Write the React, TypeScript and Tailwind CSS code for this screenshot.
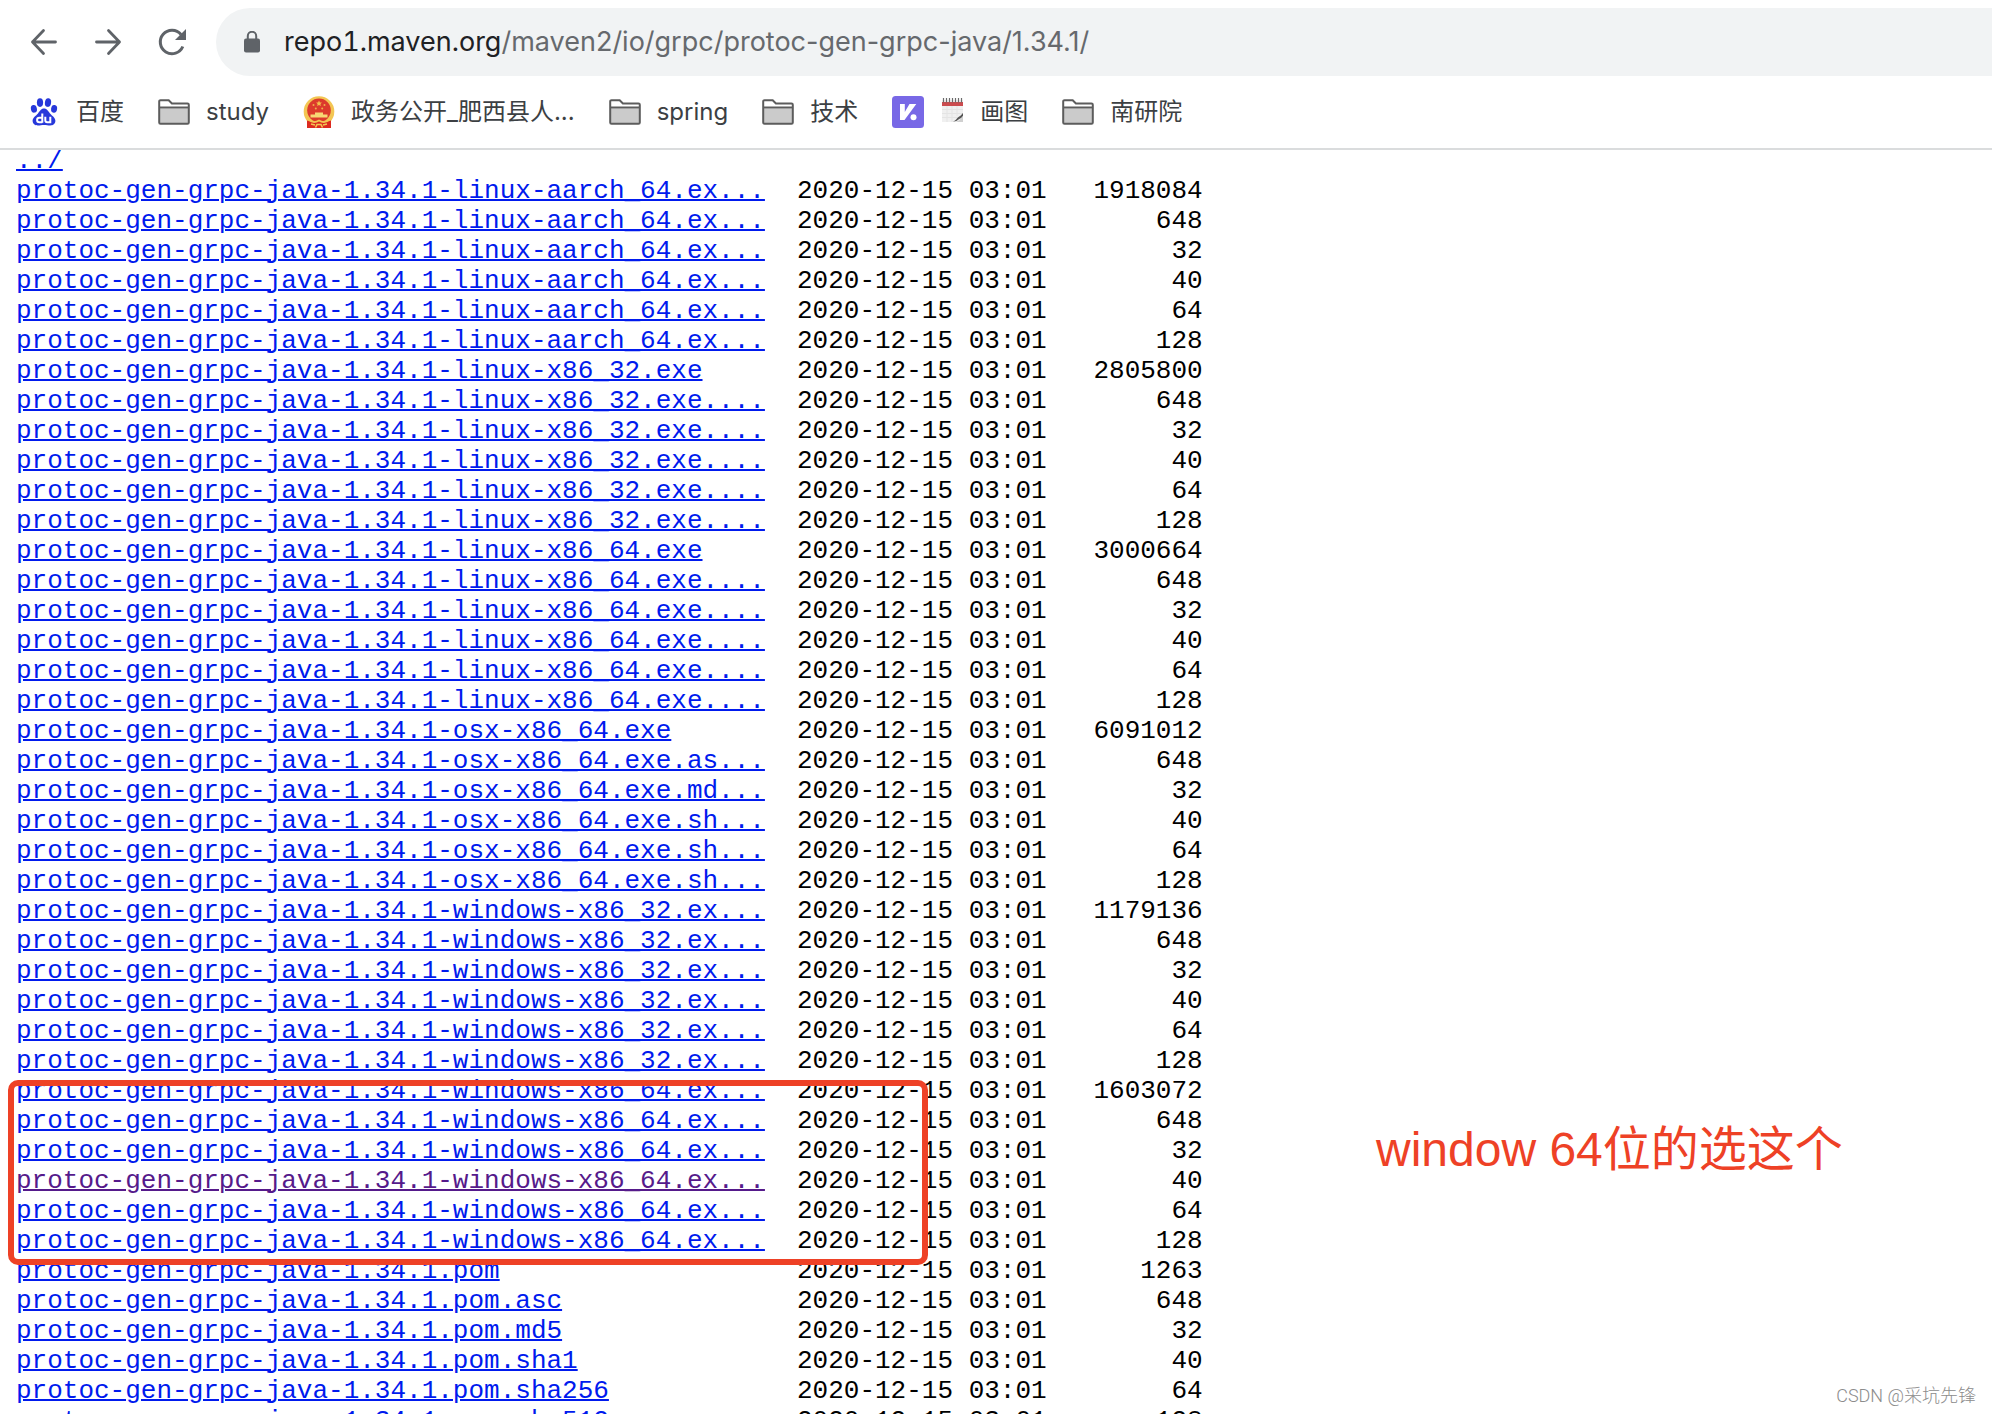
import React from "react";

const sans = "font-[Inter,'Noto_Sans_CJK_SC',sans-serif]";

type Group = { name: string; size: string };

const binaries: Group[] = [
  { name: "linux-aarch_64", size: "1918084" },
  { name: "linux-x86_32", size: "2805800" },
  { name: "linux-x86_64", size: "3000664" },
  { name: "osx-x86_64", size: "6091012" },
  { name: "windows-x86_32", size: "1179136" },
  { name: "windows-x86_64", size: "1603072" },
];

const suffixes = [".asc", ".md5", ".sha1", ".sha256", ".sha512"];
const suffixSizes = ["648", "32", "40", "64", "128"];
const prefix = "protoc-gen-grpc-java-1.34.1";

const shorten = (s: string) => (s.length > 45 ? s.slice(0, 45) + "..." : s);

const files = [
  ...binaries.map((b) => ({ base: `${prefix}-${b.name}.exe`, size: b.size })),
  { base: `${prefix}.pom`, size: "1263" },
].flatMap((f) => [
  { name: f.base, size: f.size },
  ...suffixes.map((s, i) => ({ name: f.base + s, size: suffixSizes[i] })),
]);

const visited = `${prefix}-windows-x86_64.exe.sha1`;

function Folder() {
  return (
    <svg viewBox="0 0 32 26" className="h-[26px] w-8" fill="none">
      <path d="M1.2 9.5h29.6v14a1.3 1.3 0 0 1-1.3 1.3h-27a1.3 1.3 0 0 1-1.3-1.3z" fill="#cbcbcb" />
      <path
        d="M1.2 23.5v-21A1.3 1.3 0 0 1 2.5 1.2h8.2l3.2 3.2h15.6a1.3 1.3 0 0 1 1.3 1.3v17.8a1.3 1.3 0 0 1-1.3 1.3h-27a1.3 1.3 0 0 1-1.3-1.3zM1.2 8.4h29.6"
        stroke="#5c5c5c"
        strokeWidth="2"
      />
    </svg>
  );
}

function Baidu() {
  return (
    <svg viewBox="0 0 32 32" className="size-8" fill="#2738da">
      <ellipse cx="12" cy="6.600" rx="3.100" ry="4.300" />
      <ellipse cx="20" cy="6.600" rx="3.100" ry="4.300" transform="rotate(8 20 6.600)" />
      <ellipse cx="5.900" cy="12.800" rx="3" ry="3.900" transform="rotate(-12 5.900 12.800)" />
      <ellipse cx="26.100" cy="12.800" rx="3" ry="3.900" transform="rotate(8 26.100 12.800)" />
      <path d="M16 12.500c3 0 4.300 2.800 6 4.900 2 2.300 5.400 4 5.400 7.400 0 3-2.300 4.700-5.200 4.700-2.200 0-4-.6-6.200-.6s-4 .6-6.200.6c-2.900 0-5.200-1.700-5.200-4.700 0-3.400 3.400-5.100 5.400-7.400 1.700-2.100 3-4.900 6-4.900z" />
      <path
        d="M14.300 17.500v9.200M14.300 21.800h-3a2.200 2.200 0 0 0-2.200 2.200 2.200 2.200 0 0 0 2.200 2.200h3M17.300 20.800v3.400a2 2 0 0 0 2 2h3v-5.400"
        fill="none"
        stroke="#fff"
        strokeWidth="2"
      />
    </svg>
  );
}

function Emblem() {
  return (
    <svg viewBox="0 0 32 32" className="size-8">
      <circle cx="16" cy="15.500" r="15.300" fill="#f3c653" />
      <circle cx="16" cy="14.300" r="11.800" fill="#dc3a2c" />
      <path d="M16 4.500l.9 1.900 2 .2-1.500 1.400.4 2.100-1.800-1-1.800 1 .4-2.100-1.500-1.400 2-.2z" fill="#f3c14b" />
      <g fill="#eeb04a">
        <circle cx="10.500" cy="9" r="1" />
        <circle cx="21.500" cy="9" r="1" />
        <circle cx="12.800" cy="12.500" r="1" />
        <circle cx="19.200" cy="12.500" r="1" />
      </g>
      <path d="M12 16.500h8v2h4.500v3h-17v-3H12z" fill="#f7d774" />
      <path d="M4 24.500l4 1.200c2.500.8 5 .3 8-1.700 3 2 5.500 2.500 8 1.700l4-1.200V32H4z" fill="#dc2a20" />
      <path
        d="M6 24c3 2.500 7 2.500 10 .5 3 2 7 2 10-.5M12.500 31.500l1.500-3h4l1.500 3M8 28l4 1M24 28l-4 1"
        stroke="#f3c653"
        strokeWidth="1.600"
        fill="none"
      />
    </svg>
  );
}

function Purple() {
  return (
    <svg viewBox="0 0 32 32" className="size-8">
      <rect width="32" height="32" rx="3.500" fill="#7868e6" />
      <path d="M8 8h4.800v8L17.500 8h6.800L12.500 24H8z" fill="#fff" />
      <circle cx="21.500" cy="21.300" r="3" fill="#fff" />
    </svg>
  );
}

function Notepad() {
  return (
    <svg viewBox="0 0 24 32" className="h-8 w-6">
      <rect x="2" y="4" width="21" height="22" fill="#f0f0f0" />
      <path d="M2 13.500h21M2 17.500h21M2 21.500h21M7 10v16M12 10v16M17 10v10" stroke="#e4e4e4" strokeWidth="1" />
      <rect x="2" y="6" width="21" height="4" fill="#cb4b4e" />
      <path d="M3.500 2v4.500M6.500 2v4.500M9.500 2v4.500M12.500 2v4.500M15.500 2v4.500M18.500 2v4.500M21.500 2v4.500" stroke="#6b6b6b" strokeWidth="1.200" />
      <path d="M13 25.500c2.500-.5 3.500-3 5.500-4.500 1.500-1 3-2 4.500-4v3c-1.500 2-3 2.500-4.500 3.500-1.500 1.200-3 2.200-5.500 2z" fill="#555" />
      <path d="M23 20v6h-7c3-1 5-3 7-6z" fill="#d0d0d0" />
    </svg>
  );
}

function Bookmark({ icon, label }: { icon: React.ReactNode; label: string }) {
  return (
    <a href="#" className="flex items-center gap-4 whitespace-nowrap">
      {icon}
      <span>{label}</span>
    </a>
  );
}

function FileLink({ name, seen = false }: { name: string; seen?: boolean }) {
  return (
    <a
      href="#"
      className={
        seen
          ? "text-[#551a8b] underline decoration-2 underline-offset-1"
          : "text-[#001aee] underline decoration-2 underline-offset-1"
      }
    >
      {shorten(name)}
    </a>
  );
}

export default function App() {
  return (
    <div className="flex h-screen flex-col overflow-hidden bg-white">
      <header className={`relative z-10 shrink-0 border-b-2 border-[#dadcdd] bg-white pt-2 ${sans}`}>
        <div className="flex items-center">
          <nav className="flex shrink-0 gap-8 pr-7 pl-7 text-[#5f6368]">
            <button aria-label="Back">
              <svg viewBox="0 0 32 32" className="size-8" fill="none" stroke="currentColor" strokeWidth="2.800" strokeLinecap="round" strokeLinejoin="round">
                <path d="M27.500 16H4.500M15.500 4.500L4.500 16l11 11.500" />
              </svg>
            </button>
            <button aria-label="Forward">
              <svg viewBox="0 0 32 32" className="size-8" fill="none" stroke="currentColor" strokeWidth="2.800" strokeLinecap="round" strokeLinejoin="round">
                <path d="M4.500 16h23M16.500 4.500l11 11.500-11 11.500" />
              </svg>
            </button>
            <button aria-label="Reload">
              <svg viewBox="0 0 32 32" className="size-8" fill="none" stroke="currentColor" strokeWidth="3">
                <path d="M26.800 20.500A11.700 11.700 0 1 1 25 8.500" />
                <path d="M30 3v11H19z" fill="currentColor" stroke="none" />
              </svg>
            </button>
          </nav>
          <div className="flex h-[68px] grow items-center rounded-l-full bg-[#f1f3f4] pl-7">
            <svg viewBox="0 0 16 22" className="h-[22px] w-4 shrink-0" fill="#5f6368">
              <rect y="7.500" width="16" height="14" rx="2" />
              <path d="M3.800 9V5a4.200 4.200 0 0 1 8.400 0v4" fill="none" stroke="#5f6368" strokeWidth="2" />
            </svg>
            <div className="pl-6 text-[27px] leading-9 whitespace-nowrap text-[#66696d]">
              <span className="text-[#202124] tabular-nums">repo1.maven.org</span>/maven2/io/grpc/protoc-gen-grpc-java/1.34.1/
            </div>
          </div>
        </div>
        <nav className="flex h-[72px] items-center gap-[34px] pl-7 text-2xl text-[#3c4043]">
          <Bookmark icon={<Baidu />} label="百度" />
          <Bookmark icon={<Folder />} label="study" />
          <Bookmark icon={<Emblem />} label="政务公开_肥西县人..." />
          <Bookmark icon={<Folder />} label="spring" />
          <Bookmark icon={<Folder />} label="技术" />
          <div className="flex items-center gap-4">
            <a href="#" aria-label="Bookmark">
              <Purple />
            </a>
            <Bookmark icon={<Notepad />} label="画图" />
          </div>
          <Bookmark icon={<Folder />} label="南研院" />
        </nav>
      </header>

      <main className="relative -mt-1 grow">
        <table className="ml-4 border-collapse font-['Liberation_Mono',monospace] text-[26px] leading-[30px] whitespace-pre text-black">
          <tbody>
            <tr>
              <td className="p-0">
                <FileLink name="../" />
              </td>
            </tr>
            {files.map((f) => (
              <tr key={f.name}>
                <td className="w-[781px] p-0">
                  <FileLink name={f.name} seen={f.name === visited} />
                </td>
                <td className="p-0">2020-12-15 03:01</td>
                <td className="w-[156px] p-0 text-right">{f.size}</td>
              </tr>
            ))}
          </tbody>
        </table>
        <div className="absolute top-[934px] left-2 h-[185px] w-[920px] rounded-[10px] border-6 border-[#ee4126]" />
        <p className="absolute top-[976px] left-[1376px] font-['Liberation_Sans','Noto_Sans_CJK_SC',sans-serif] text-5xl leading-[56px] whitespace-nowrap text-[#ee4126]">
          window 64位的选这个
        </p>
      </main>

      <footer className="absolute right-4 bottom-1 font-[Roboto,'Noto_Sans_CJK_SC',sans-serif] text-lg leading-7 font-light text-[#8c8c8c]">
        CSDN @采坑先锋
      </footer>
    </div>
  );
}
